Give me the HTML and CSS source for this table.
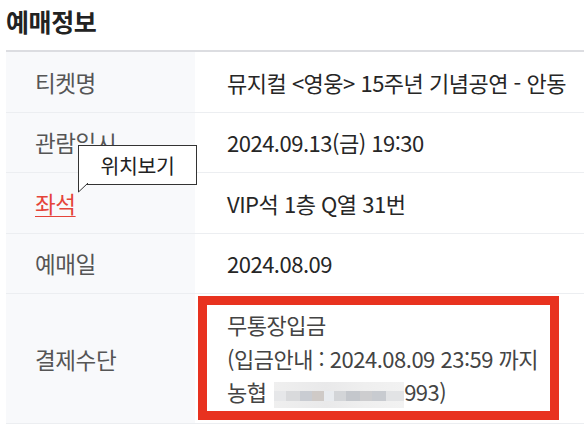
FILE: index.html
```html
<!DOCTYPE html>
<html lang="ko">
<head>
<meta charset="utf-8">
<link rel="stylesheet" href="styles.css">
</head>
<body>
<div class="page">
  <h2 class="title">예매정보</h2>
  <div class="table">
    <div class="row">
      <div class="label">티켓명</div>
      <div class="value">뮤지컬 &lt;영웅&gt; 15주년 기념공연 - 안동</div>
    </div>
    <div class="row">
      <div class="label">관람일시</div>
      <div class="value">2024.09.13(금) 19:30</div>
    </div>
    <div class="row">
      <div class="label seat-cell">
        <a class="seat">좌석</a>
        <div class="tooltip">위치보기
          <svg class="tail" width="12" height="10" viewBox="0 0 12 10"><path d="M0.5 0 L0.5 9 L10 0" fill="#fff" stroke="#333" stroke-width="1"/></svg>
        </div>
      </div>
      <div class="value">VIP석 1층 Q열 31번</div>
    </div>
    <div class="row">
      <div class="label">예매일</div>
      <div class="value">2024.08.09</div>
    </div>
    <div class="row row-pay">
      <div class="label">결제수단</div>
      <div class="value pay">
        <div>무통장입금</div>
        <div>(입금안내 : 2024.08.09 23:59 까지</div>
        <div>농협 <span class="blur"></span>993)</div>
        <div class="highlight"></div>
      </div>
    </div>
  </div>
</div>
</body>
</html>
```
FILE: styles.css
```css
html, body {
  margin: 0;
  padding: 0;
  background: #fff;
}
.page {
  font-family: "Noto Sans CJK KR", "Noto Sans", sans-serif;
  padding: 6px 0 0 6px;
  overflow: hidden;
  width: 578px;
}
.title {
  margin: 0 0 14px 0;
  font-size: 25px;
  line-height: 30px;
  font-weight: 700;
  color: #222;
  letter-spacing: -0.4px;
}
.table {
  border-top: 2px solid #dcdde1;
  width: 600px;
}
.row {
  display: grid;
  grid-template-columns: 189px 1fr;
  height: 59.5px;
  border-bottom: 1px solid #eceef1;
}
.label {
  background: #f8f9fb;
  display: flex;
  align-items: center;
  padding-left: 29px;
  font-size: 22.5px;
  color: #555;
  letter-spacing: -0.4px;
}
.value {
  display: flex;
  align-items: center;
  padding-left: 32px;
  font-size: 22px;
  color: #262626;
  letter-spacing: -0.5px;
  white-space: nowrap;
}
.seat-cell {
  position: relative;
}
.seat {
  color: #e5443a;
  text-decoration: underline;
  text-underline-offset: 3px;
  text-decoration-thickness: 1px;
}
.tooltip {
  position: absolute;
  left: 72px;
  top: -28px;
  width: 119px;
  height: 40px;
  box-sizing: border-box;
  border: 1px solid #333;
  background: #fff;
  font-size: 20.5px;
  color: #222;
  display: flex;
  align-items: center;
  justify-content: center;
  letter-spacing: -0.3px;
  z-index: 2;
}
.tail {
  position: absolute;
  left: -1px;
  bottom: -9px;
  display: block;
}
.row-pay {
  height: 129px;
}
.pay {
  position: relative;
  flex-direction: column;
  align-items: flex-start;
  justify-content: center;
  line-height: 33.5px;
  color: #444;
}
.blur {
  display: inline-block;
  vertical-align: middle;
  width: 130px;
  height: 26px;
  margin-left: 2px;
  background:
    linear-gradient(to right,
      #e6e7e9 0 12px, #d9dadc 12px 26px, #c9ccd2 26px 38px, #cfcac7 38px 50px,
      #e8ebef 50px 60px, #d3d5d8 60px 72px, #c4c7cc 72px 86px, #cdcdcf 86px 98px,
      #c8cbd0 98px 112px, #e2e3e5 112px 130px) 0 9px / 130px 10px no-repeat,
    linear-gradient(to right, #efefef, #e9e9ea 40%, #efefef 70%, #f2f2f2);
}
.highlight {
  position: absolute;
  left: 3px;
  top: 2px;
  width: 361px;
  height: 124px;
  box-sizing: border-box;
  border: 9px solid #e8321f;
}
```
